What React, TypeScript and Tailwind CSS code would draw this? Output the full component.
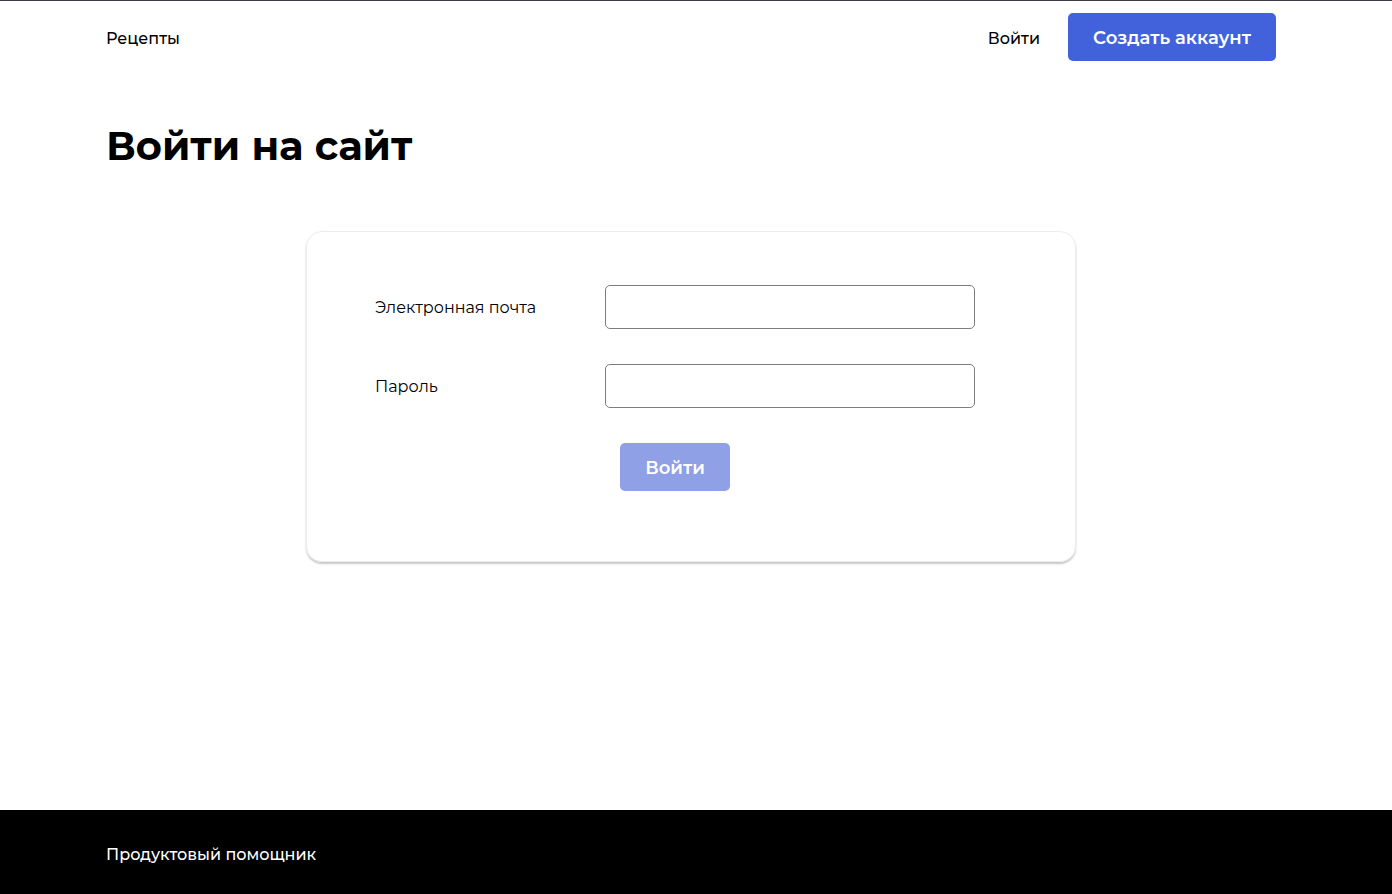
export default function App() {
  return (
    <div className="min-h-[894px] flex flex-col bg-white font-['Montserrat','Inter',sans-serif] text-black">
      {/* Header */}
      <header className="border-t border-[#3d3d4a]">
        <div className="w-[1170px] ml-[106px] h-[72px] flex items-center justify-between">
          <a href="#" className="text-[16px] font-medium leading-none pt-[4px]">Рецепты</a>
          <nav className="flex items-center gap-[28px]">
            <a href="#" className="text-[16px] font-medium leading-none pt-[4px]">Войти</a>
            <button className="w-[208px] h-[48px] rounded-[5px] bg-[#4262dc] text-white text-[18px] font-semibold pt-[2px]">
              Создать аккаунт
            </button>
          </nav>
        </div>
      </header>

      <main className="flex-1 w-[1170px] ml-[106px]">
        <h1 className="mt-[49px] text-[40px] leading-[48px] font-bold">Войти на сайт</h1>

        {/* Login card */}
        <div className="mx-auto mt-[61px] w-[770px] rounded-[16px] border border-[#ececec] shadow-[0_2px_2px_rgba(0,0,0,0.22)] pt-[53px] pb-[70px] pl-[68px]">
          <form className="flex flex-col gap-[35px]">
            <label className="flex items-center">
              <span className="w-[230px] text-[16px] pt-[2px]">Электронная почта</span>
              <input type="email" className="w-[370px] h-[44px] rounded-[5px] border border-[#7d7d7d] px-3 outline-none" />
            </label>
            <label className="flex items-center">
              <span className="w-[230px] text-[16px] pt-[2px]">Пароль</span>
              <input type="password" className="w-[370px] h-[44px] rounded-[5px] border border-[#7d7d7d] px-3 outline-none" />
            </label>
            <div>
              <button type="button" disabled className="ml-[245px] w-[110px] h-[48px] rounded-[5px] bg-[#8fa0e7] text-white text-[18px] font-semibold pt-[2px]">
                Войти
              </button>
            </div>
          </form>
        </div>
      </main>

      <footer className="h-[84px] bg-black">
        <div className="w-[1170px] ml-[106px] h-full flex items-center pt-[5px]">
          <span className="text-white text-[16px] font-medium">Продуктовый помощник</span>
        </div>
      </footer>
    </div>
  );
}
